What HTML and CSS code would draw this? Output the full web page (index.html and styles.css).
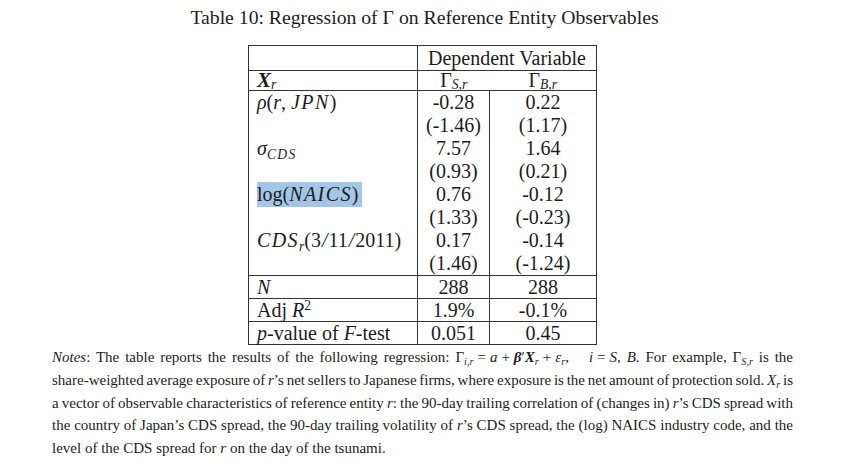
FILE: index.html
```html
<!DOCTYPE html>
<html>
<head>
<meta charset="utf-8">
<link rel="stylesheet" href="styles.css">
</head>
<body>
<div class="page">
  <h1 class="caption">Table 10: Regression of Γ on Reference Entity Observables</h1>
  <div class="table-wrap">
    <table class="reg">
      <tr class="r-head1">
        <td class="c1"></td>
        <td class="c23" colspan="2">Dependent Variable</td>
      </tr>
      <tr class="r-head2">
        <td class="c1"><b class="bx">X</b><sub class="it">r</sub></td>
        <td class="c2 nosep">Γ<sub class="it">S,r</sub></td>
        <td class="c3">Γ<sub class="it">B,r</sub></td>
      </tr>
      <tr class="r-data">
        <td class="c1"><span class="it">ρ</span>(<span class="it">r</span>, <span class="it mw">JPN</span>)</td>
        <td class="c2">-0.28</td>
        <td class="c3">0.22</td>
      </tr>
      <tr class="r-data">
        <td class="c1"></td>
        <td class="c2">(-1.46)</td>
        <td class="c3">(1.17)</td>
      </tr>
      <tr class="r-data">
        <td class="c1"><span class="it">σ</span><sub class="it mw">CDS</sub></td>
        <td class="c2">7.57</td>
        <td class="c3">1.64</td>
      </tr>
      <tr class="r-data">
        <td class="c1"></td>
        <td class="c2">(0.93)</td>
        <td class="c3">(0.21)</td>
      </tr>
      <tr class="r-data">
        <td class="c1"><span class="hl">log(<span class="it mw">NAICS</span>)</span></td>
        <td class="c2">0.76</td>
        <td class="c3">-0.12</td>
      </tr>
      <tr class="r-data">
        <td class="c1"></td>
        <td class="c2">(1.33)</td>
        <td class="c3">(-0.23)</td>
      </tr>
      <tr class="r-data">
        <td class="c1"><span class="it mw">CDS</span><sub class="it">r</sub>(3<span class="it sl">/</span>11<span class="it sl">/</span>2011)</td>
        <td class="c2">0.17</td>
        <td class="c3">-0.14</td>
      </tr>
      <tr class="r-data">
        <td class="c1"></td>
        <td class="c2">(1.46)</td>
        <td class="c3">(-1.24)</td>
      </tr>
      <tr class="r-stat">
        <td class="c1"><span class="it">N</span></td>
        <td class="c2">288</td>
        <td class="c3">288</td>
      </tr>
      <tr class="r-stat">
        <td class="c1">Adj <span class="it">R</span><sup>2</sup></td>
        <td class="c2">1.9%</td>
        <td class="c3">-0.1%</td>
      </tr>
      <tr class="r-stat">
        <td class="c1"><span class="it">p</span>-value of <span class="it">F</span>-test</td>
        <td class="c2">0.051</td>
        <td class="c3">0.45</td>
      </tr>
    </table>
  </div>
  <div class="notes">
    <div class="line"><span class="it">Notes</span>: The table reports the results of the following regression: Γ<sub class="it">i,r</sub><span class="op">=</span><span class="it">a</span><span class="op">+</span><b class="bx">β</b>′<b class="bx">X</b><sub class="it">r</sub><span class="op">+</span><span class="it">ε</span><sub class="it">r</sub>,<span class="gap"></span><span class="it">i</span><span class="op">=</span><span class="it">S, B</span>. For example, Γ<sub class="it">S,r</sub> is the</div>
    <div class="line">share-weighted average exposure of <span class="it">r</span>’s net sellers to Japanese firms, where exposure is the net amount of protection sold. <span class="it">X</span><sub class="it">r</sub> is</div>
    <div class="line">a vector of observable characteristics of reference entity <span class="it">r</span>: the 90-day trailing correlation of (changes in) <span class="it">r</span>’s CDS spread with</div>
    <div class="line">the country of Japan’s CDS spread, the 90-day trailing volatility of <span class="it">r</span>’s CDS spread, the (log) NAICS industry code, and the</div>
    <div class="line end">level of the CDS spread for <span class="it">r</span> on the day of the tsunami.</div>
  </div>
</div>
</body>
</html>
```

FILE: styles.css
```css
html, body {
  margin: 0;
  padding: 0;
  background: #ffffff;
}

body {
  font-family: "Liberation Serif", "Times New Roman", serif;
  color: #1c1c1c;
}

.page {
  width: 849px;
  height: 469px;
  overflow: hidden;
}

.caption {
  margin: 0;
  padding-top: 5px;
  font-size: 19.7px;
  font-weight: normal;
  line-height: 24px;
  text-align: center;
}

.table-wrap {
  padding-top: 16px;
  padding-left: 248px;
}

.reg {
  border-collapse: collapse;
  font-size: 20px;
  border: 1.5px solid #333;
}

.reg td {
  padding: 0;
  white-space: nowrap;
}

.c1 {
  width: 160px;
  padding-left: 8px !important;
  text-align: left;
  border-right: 1.5px solid #333;
}

.c2 {
  width: 71px;
  text-align: center;
  border-right: 1.5px solid #333;
}

.c2.nosep {
  border-right: none;
}

.c3 {
  width: 106px;
  text-align: center;
}

.c23 {
  text-align: center;
}

.r-head1 td {
  height: 24px;
  line-height: 24px;
  border-bottom: 1.5px solid #333;
}

.r-head2 td {
  height: 19px;
  line-height: 18px;
  border-bottom: 1.5px solid #333;
  vertical-align: top;
}

.r-head2 sub {
  vertical-align: -0.15em;
}

.r-head2 .bx {
  font-size: 21px;
}

.r-data td {
  height: 23px;
  line-height: 23px;
}

.r-stat td {
  height: 22px;
  line-height: 22px;
  border-top: 1.5px solid #333;
}

.it {
  font-style: italic;
}

.mw {
  letter-spacing: 1.4px;
}

.sl {
  padding: 0 1px;
}

.bx {
  font-style: italic;
  font-weight: bold;
}

sub, sup {
  font-size: 0.68em;
  line-height: 0;
}

sub {
  vertical-align: -0.3em;
}

sup {
  vertical-align: 0.55em;
}

.hl {
  background: #a3c6e6;
  padding: 1px 4px 2px 0;
}

.notes {
  padding: 1px 56px 0 52px;
  font-size: 15px;
  line-height: 22.8px;
}

.notes .line {
  word-spacing: -2px;
  text-align: justify;
  text-align-last: justify;
}

.notes .line.end {
  word-spacing: 0;
  text-align-last: left;
}

.op {
  padding: 0 4px;
}

.gap {
  display: inline-block;
  width: 20px;
}
```
